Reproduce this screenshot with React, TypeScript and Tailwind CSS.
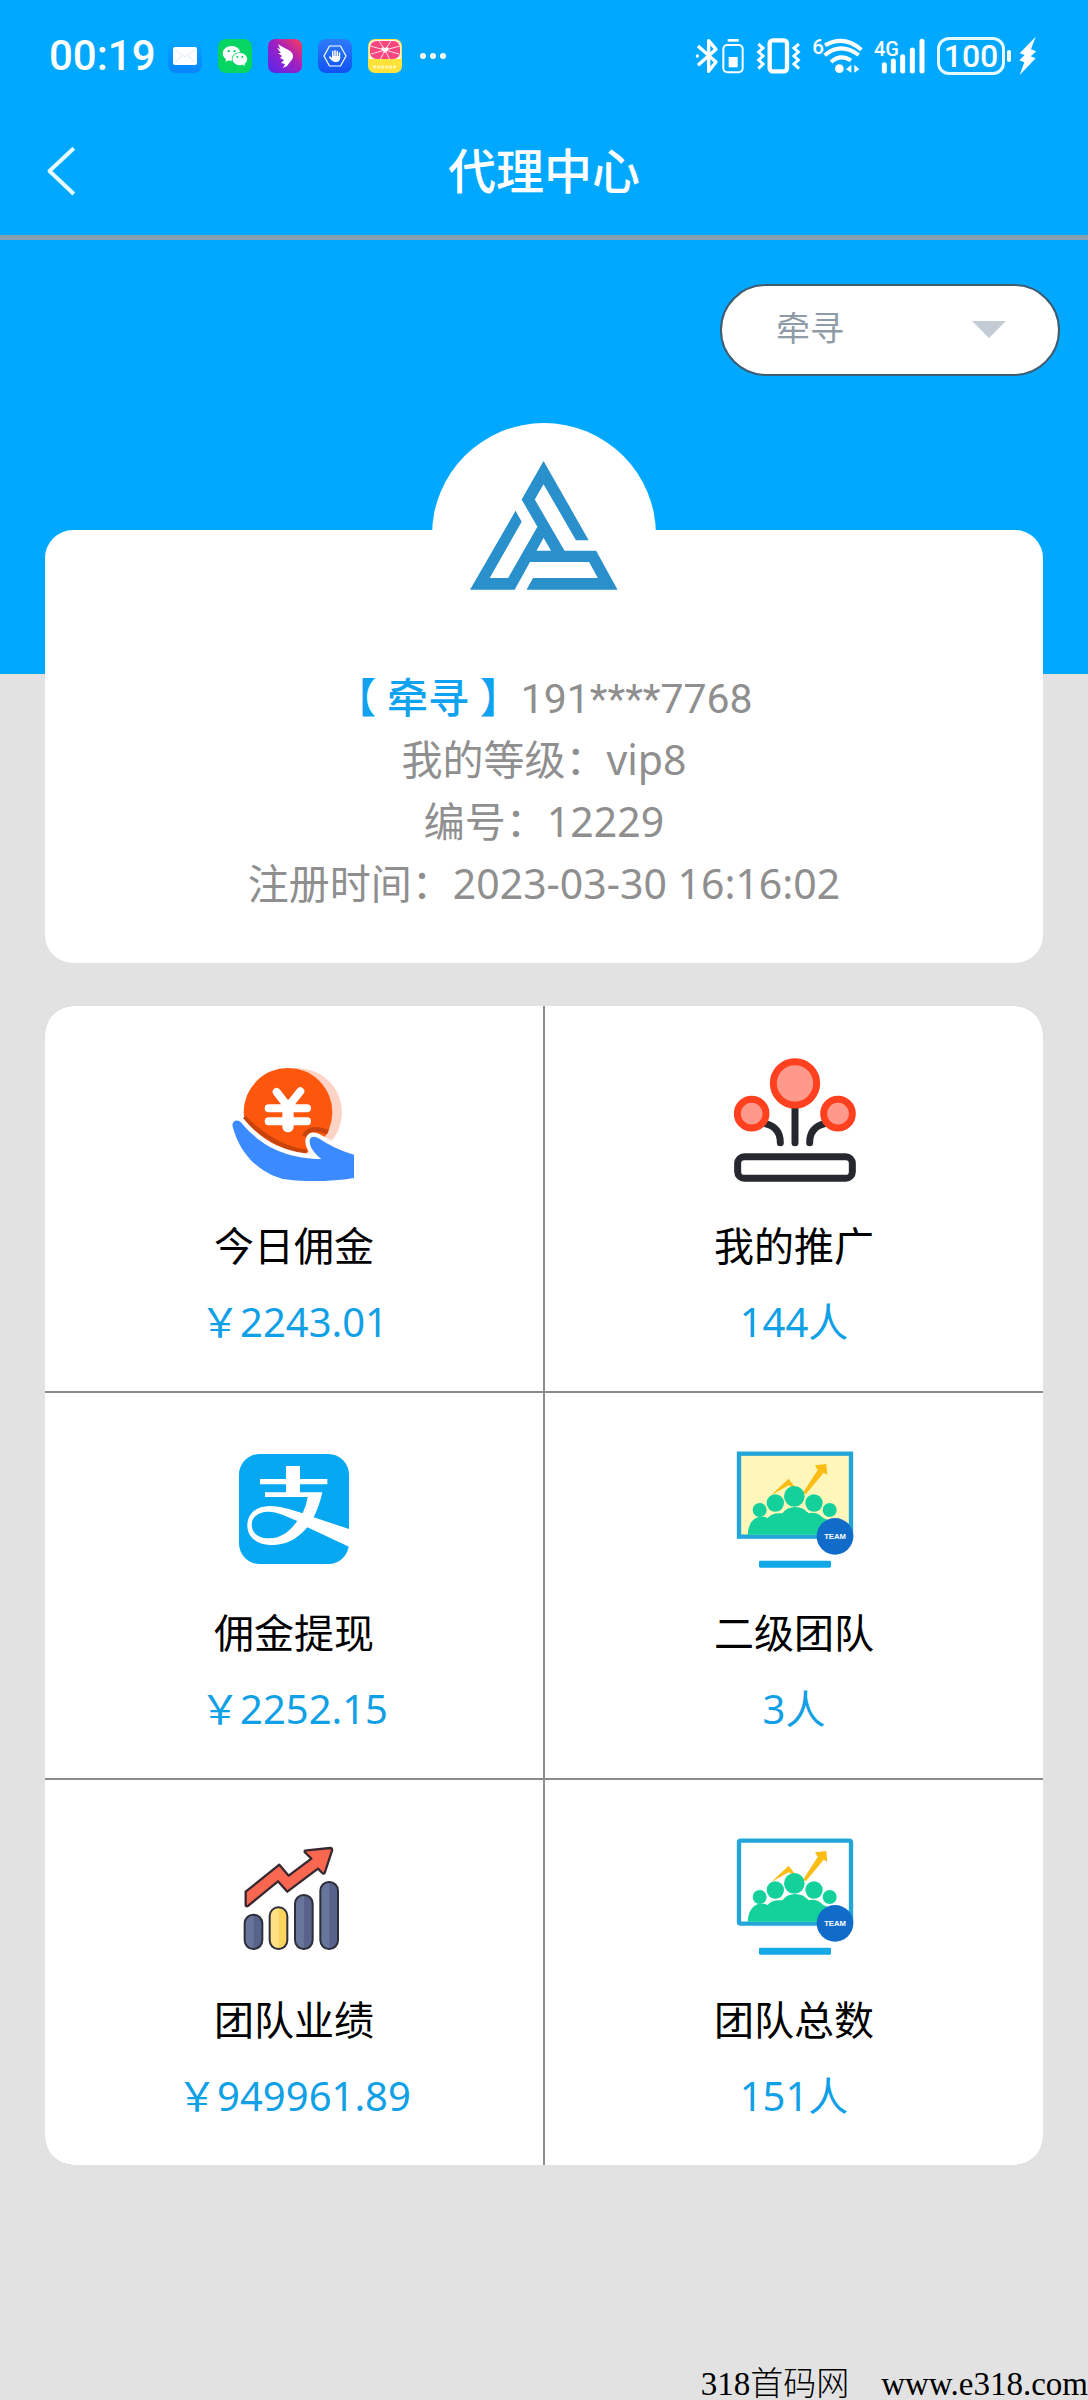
import type { ReactNode } from "react";
import { AiFillWechat } from "react-icons/ai";
import { FaHand } from "react-icons/fa6";

function AppIcons() {
  return (
    <div className="flex items-center gap-4">
      <span className="flex size-[34px] items-center justify-center rounded-lg bg-linear-to-b from-[#08a8ff] to-[#0a84ff]">
        <svg viewBox="0 0 24 18" className="w-6" aria-hidden="true">
          <rect width="24" height="18" rx="2" fill="#fff" />
          <path d="M2 3 L12 10 L22 3 M2 15 L9 9 M22 15 L15 9" fill="none" stroke="#dbe9f8" strokeWidth="1" />
        </svg>
      </span>
      <span className="flex size-[34px] items-center justify-center rounded-lg bg-[#06d562]">
        <AiFillWechat className="size-7 text-white" />
      </span>
      <svg viewBox="0 0 34 34" className="size-[34px]" aria-hidden="true">
        <defs>
          <linearGradient id="wing" x1="1" y1="0" x2="0" y2="1">
            <stop offset="0" stopColor="#ff3d5a" />
            <stop offset="0.45" stopColor="#a01fc0" />
            <stop offset="1" stopColor="#5528f0" />
          </linearGradient>
        </defs>
        <rect width="34" height="34" rx="7" fill="url(#wing)" />
        <path d="M10 5 C13 8 21 10 24 14 C26 17 25 20 22 23 L19 27 L15 29 L17 25 L13 24 L16 21 L12 19 L14 17 L10 14 L13 14 L9 9 L12 10 Z" fill="#fff" />
      </svg>
      <span className="relative flex size-[34px] items-center justify-center rounded-lg bg-linear-to-b from-[#2f7bfb] to-[#1152f2]">
        <svg viewBox="0 0 24 22" className="w-6" aria-hidden="true">
          <path d="M6.500 1 H17.500 L23 11 L17.500 21 H6.500 L1 11 Z" fill="none" stroke="#fff" strokeWidth="1.200" />
        </svg>
        <FaHand className="absolute size-3 text-white" />
      </span>
      <svg viewBox="0 0 34 34" className="size-[34px]" aria-hidden="true">
        <rect width="34" height="34" rx="7" fill="#ffe23a" />
        <path d="M1 8 Q1 1 8 1 H26 Q33 1 33 8 V20 H1 Z" fill="#fff6f0" />
        <path d="M2 10 Q2 2 9 2 H25 Q32 2 32 10 V14 Q31 20 24 20 H10 Q3 20 2 14 Z" fill="#f8467f" />
        <path d="M17 11 L11 2 M17 11 L23 2 M17 11 L2 7 M17 11 L32 7 M17 11 L3 15 M17 11 L31 15 M17 11 L12 21 M17 11 L22 21" stroke="#ffd9e2" strokeWidth="1" />
        <path d="M17 14 L13 10 Q14 7 17 9 Q20 7 21 10 Z" fill="#fff" />
        <path d="M5 28 H29" stroke="#fff3a8" strokeWidth="3" strokeDasharray="3 1" />
      </svg>
    </div>
  );
}

function StatusBar() {
  return (
    <div className="flex h-28 items-center justify-between pr-[51px] pl-[49px] text-white">
      <div className="flex items-center gap-3">
        <span className="font-['Roboto',sans-serif] text-[42px] leading-none font-medium">00:19</span>
        <AppIcons />
        <svg viewBox="0 0 27 6" className="ml-1.5 w-[27px]" fill="#fff" aria-hidden="true">
          <circle cx="3" cy="3" r="3" />
          <circle cx="13" cy="3" r="3" />
          <circle cx="23" cy="3" r="3" />
        </svg>
      </div>
      <div className="flex items-center gap-[11px]">
        <svg viewBox="99 108 150 120" className="h-10 w-[50px]" fill="none" stroke="#fff" aria-hidden="true">
          <path d="M108 138 L162 186 L140 214 V122 L162 148 L108 196" strokeWidth="10" strokeLinejoin="round" />
          <circle cx="106" cy="168" r="5" fill="#fff" stroke="none" />
          <rect x="184" y="135" width="58" height="82" rx="12" strokeWidth="6" />
          <path d="M197 121 H230" strokeWidth="8" />
          <rect x="200" y="171" width="27" height="31" fill="#fff" stroke="none" />
        </svg>
        <svg viewBox="285 108 135 120" className="h-10 w-[45px]" fill="none" stroke="#fff" aria-hidden="true">
          <rect x="326" y="121" width="52" height="93" rx="9" strokeWidth="13" />
          <path d="M292 132 L306 144 L293 156 L306 168 L293 180 L306 192 L292 206 M414 132 L399 144 L412 156 L399 168 L412 180 L399 192 L414 206" strokeWidth="9" />
        </svg>
        <svg viewBox="450 108 153 120" className="h-10 w-[51px] overflow-visible" fill="none" stroke="#fff" aria-hidden="true">
          <text x="451" y="161" fontSize="62" fontWeight="500" fontFamily="Roboto, sans-serif" fill="#fff" stroke="none">6</text>
          <path d="M489 136 Q545 104 598 149 M488 166 Q536 125 590 165 M507 186 Q535 161 567 181" strokeWidth="12" />
          <circle cx="532" cy="206" r="13" fill="#fff" stroke="none" />
          <path d="M552 208 L568 194 V218 M577 218 V194 L592 208 Z" fill="#fff" stroke="none" />
        </svg>
        <svg viewBox="636 108 156 120" className="h-10 w-[52px] overflow-visible" stroke="#fff" aria-hidden="true">
          <text x="636" y="167" fontSize="60" fontWeight="500" fontFamily="Roboto, sans-serif" fill="#fff" stroke="none">4G</text>
          <path d="M667 194 V213 M694 183 V213 M722 170 V213 M751 150 V213 M780 124 V213" strokeWidth="15" strokeLinecap="round" />
        </svg>
        <div className="flex items-center gap-0.5">
          <span className="flex h-[38px] w-[68px] items-center justify-center rounded-xl border-3 border-[#e6fbff] font-['Roboto',sans-serif] text-[32px] leading-none font-medium">
            100
          </span>
          <span className="h-3 w-1 rounded-full bg-white" />
          <svg viewBox="1078 108 54 120" className="ml-1.5 h-10 w-[18px]" fill="#fff" aria-hidden="true">
            <path d="M1128 110 L1080 160 L1095 165 L1079 181 L1094 187 L1080 225 L1128 175 L1113 169 L1130 154 L1114 148 Z" />
          </svg>
        </div>
      </div>
    </div>
  );
}

function Logo() {
  return (
    <svg viewBox="160 602 338 388" preserveAspectRatio="none" className="h-[129px] w-[148px]" fill="#2a90cb" aria-hidden="true">
      <path d="M328 602 L431 840 H402 L328 672 L308 718 L376 872 H448 L497 989 H289 L304 954 H452 L432 906 H297 L262 989 H160 L264 752 L278 785 L205 954 H247 L314 800 L278 718 Z M328 833 L312 872 H345 Z" fillRule="evenodd" />
    </svg>
  );
}

function CoinInHand() {
  return (
    <svg viewBox="96 84 372 372" className="size-[124px]" aria-hidden="true">
      <circle cx="294" cy="247" r="132" fill="#ffd3c6" />
      <circle cx="264" cy="247" r="133" fill="#fd560d" />
      <path d="M132 262 Q220 352 320 366 M312 318 Q330 285 384 306" fill="none" stroke="#c9440d" strokeWidth="14" />
      <path d="M230 186 L264 230 L301 184 M206 235 H321 M206 274 H321" fill="none" stroke="#fff" strokeWidth="24" strokeLinecap="round" />
      <path d="M264 226 V290" fill="none" stroke="#fff" strokeWidth="34" strokeLinecap="round" />
      <path
        d="M98 290 C94 272 112 266 124 278 C180 345 250 385 364 387 C340 368 325 345 330 328 C336 314 352 322 364 330 C400 352 432 366 462 374 V444 C385 457 300 455 246 446 C170 425 118 365 98 290 Z"
        fill="#3b8aff"
        stroke="#fff"
        strokeWidth="26"
        strokeLinejoin="round"
        paintOrder="stroke"
      />
      <path d="M463 350 H490 V470 H463 Z" fill="#fff" />
    </svg>
  );
}

function Sprouts() {
  return (
    <svg viewBox="96 84 372 372" className="size-[124px]" fill="none" aria-hidden="true">
      <path d="M285 225 V338 M196 281 Q241 292 241 338 M374 281 Q329 292 329 338" stroke="#25292f" strokeWidth="21" strokeLinecap="round" />
      <g fill="#ff998c" stroke="#ff4120" strokeWidth="21">
        <circle cx="285" cy="160" r="65" />
        <circle cx="155" cy="251" r="43" />
        <circle cx="414" cy="251" r="43" />
      </g>
      <rect x="113" y="380" width="344" height="65" rx="20" stroke="#25292f" strokeWidth="21" />
    </svg>
  );
}

function Alipay() {
  return (
    <svg viewBox="96 45 372 372" className="size-[124px]" aria-hidden="true">
      <rect x="117" y="72" width="330" height="330" rx="62" fill="#05a8f1" />
      <path d="M258 108 H300 V147 H382 V163 H300 V187 H367 Q358 228 341 262 L447 297 V350 L322 292 C285 335 250 346 212 345 C165 343 141 318 142 284 C144 248 170 229 210 228 C245 228 275 240 308 250 Q320 225 323 201 H195 V187 H258 V163 H180 V147 H258 Z M292 273 C255 258 230 244 203 245 C172 247 155 262 155 285 C156 310 175 326 210 325 C245 324 270 303 292 273 Z" fill="#fff" fillRule="evenodd" />
    </svg>
  );
}

function TeamBoard({ fill, corner }: { fill: string; corner: number }) {
  return (
    <svg viewBox="96 43 372 372" className="size-[124px]" aria-hidden="true">
      <rect x="117" y="69" width="336" height="249" rx={corner} fill={fill} stroke="#22a6d9" strokeWidth="13" />
      <path d="M213 194 L266 144 L290 176 L266 164 Z M308 188 L353 118 L345 104 L379 100 L382 132 L371 126 L318 190 Z" fill="#fbbc14" />
      <path d="M143 312 Q146 265 178 258 Q195 256 203 262 Q215 245 247 248 Q262 229 285 229 Q310 229 326 248 Q350 242 370 262 L400 275 V312 Z" fill="#14d19c" />
      <g fill="#14d19c">
        <circle cx="283" cy="197" r="31" />
        <circle cx="226" cy="217" r="26" />
        <circle cx="342" cy="217" r="26" />
        <circle cx="179" cy="238" r="21" />
        <circle cx="389" cy="238" r="21" />
      </g>
      <path d="M200 259 Q209 252 219 245 M238 243 Q245 244 251 240 M317 240 Q325 245 332 243 M350 245 Q362 252 370 260" fill="none" stroke="#eafad0" strokeWidth="3" />
      <circle cx="405" cy="317" r="55" fill="#116cc9" />
      <text x="405" y="326" textAnchor="middle" fontSize="23" fontWeight="700" fontFamily="'Liberation Sans', sans-serif" fill="#fff">
        TEAM
      </text>
      <rect x="177" y="390" width="216" height="21" rx="4" fill="#12a9e6" />
    </svg>
  );
}

const bars = [
  { x: 134, y: 284, color: "#68759a", shade: "#59628b" },
  { x: 209, y: 262, color: "#ffe184", shade: "#fbd45e" },
  { x: 285, y: 225, color: "#68759a", shade: "#59628b" },
  { x: 361, y: 186, color: "#68759a", shade: "#59628b" },
];

function GrowthChart() {
  return (
    <svg viewBox="96 36 372 372" className="size-[124px]" aria-hidden="true">
      {bars.map((bar) => (
        <g key={bar.x}>
          <rect x={bar.x} y={bar.y} width="53" height={387 - bar.y} rx="26" fill={bar.color} />
          <path d={`M${bar.x + 27} ${bar.y} a26 26 0 0 1 26 26 V361 a26 26 0 0 1 -26 26 Z`} fill={bar.shade} />
          <rect x={bar.x} y={bar.y} width="53" height={387 - bar.y} rx="26" fill="none" stroke="#2d2e3a" strokeWidth="6" />
        </g>
      ))}
      <path d="M137 215 L238 134 L266 167 L334 116 L314 96 Q313 91 320 91 L391 84 Q397 85 396 92 L374 159 Q371 163 367 159 L354 146 L262 215 L234 184 L145 257 Q137 262 137 254 Z" fill="#fa6750" stroke="#38282f" strokeWidth="7" strokeLinejoin="round" />
    </svg>
  );
}

const stats: { label: string; value: string; icon: ReactNode }[] = [
  { label: "今日佣金", value: "￥2243.01", icon: <CoinInHand /> },
  { label: "我的推广", value: "144人", icon: <Sprouts /> },
  { label: "佣金提现", value: "￥2252.15", icon: <Alipay /> },
  { label: "二级团队", value: "3人", icon: <TeamBoard fill="#fff6b9" corner={0} /> },
  { label: "团队业绩", value: "￥949961.89", icon: <GrowthChart /> },
  { label: "团队总数", value: "151人", icon: <TeamBoard fill="#ffffff" corner={5} /> },
];

export default function App() {
  return (
    <div className="flex min-h-screen flex-col bg-[#e2e2e2] font-['Noto_Sans','Noto_Sans_CJK_SC',sans-serif]">
      <header className="border-b-5 border-[#879fae] bg-[#00a9ff]">
        <StatusBar />
        <div className="grid h-[123px] grid-cols-[1fr_auto_1fr] items-center px-[46px] pb-1.5 text-white">
          <button type="button" aria-label="返回" className="w-fit">
            <svg viewBox="140 438 90 158" className="h-[52px] w-[30px]" fill="none" stroke="#e6fbff" strokeWidth="12" aria-hidden="true">
              <path d="M224 448 L150 517 L224 587" strokeLinejoin="round" />
            </svg>
          </button>
          <h1 className="text-5xl leading-[60px] font-medium">代理中心</h1>
        </div>
      </header>

      <main>
        <div className="flex h-[434px] items-start justify-end bg-[#00a9ff] pt-11 pr-7">
          <div className="relative">
            <select aria-label="代理" className="h-[92px] w-[340px] appearance-none rounded-full border-2 border-[#3f5c70] bg-white pr-24 pb-1 pl-[54px] text-[34px] text-[#8f9ca8]">
              <option>牵寻</option>
            </select>
            <svg viewBox="0 0 34 17" className="pointer-events-none absolute top-[37px] right-[54px] w-[34px]" fill="#c3ccd4" aria-hidden="true">
              <path d="M0 0 H34 L17 17 Z" />
            </svg>
          </div>
        </div>

        <section className="mx-[45px] -mt-36 flex flex-col items-center rounded-[28px] bg-white pb-[49px] text-center text-[41px] leading-[62px] text-[#8f8f8f]">
          <div className="-mt-[107px] flex size-56 items-start justify-center rounded-full bg-white pt-[38px]">
            <Logo />
          </div>
          <p className="mt-[19px]">
            <span className="font-medium text-[#0ea2f0]">【 牵寻 】</span>
            <span className="font-['Roboto',sans-serif] leading-none">191****7768</span>
          </p>
          <p>我的等级：vip8</p>
          <p>编号：12229</p>
          <p>注册时间：2023-03-30 16:16:02</p>
        </section>

        <section className="mx-[45px] mt-[43px] grid grid-cols-2 gap-0.5 overflow-hidden rounded-[28px] bg-[#8c8c8c]">
          {stats.map((item) => (
            <a key={item.label} href="#" className="flex flex-col items-center bg-white pt-[52px] pb-[39px] text-[40px] leading-[60px]">
              {item.icon}
              <span className="mt-[34px] text-black">{item.label}</span>
              <span className="mt-4 text-[#10a0e6]">{item.value}</span>
            </a>
          ))}
        </section>
      </main>

      <footer className="mt-auto flex justify-end gap-8 font-['Liberation_Serif','Noto_Sans_CJK_SC',serif] text-[33px] leading-8 font-light text-black">
        <span>318首码网</span>
        <a href="#">www.e318.com</a>
      </footer>
    </div>
  );
}
